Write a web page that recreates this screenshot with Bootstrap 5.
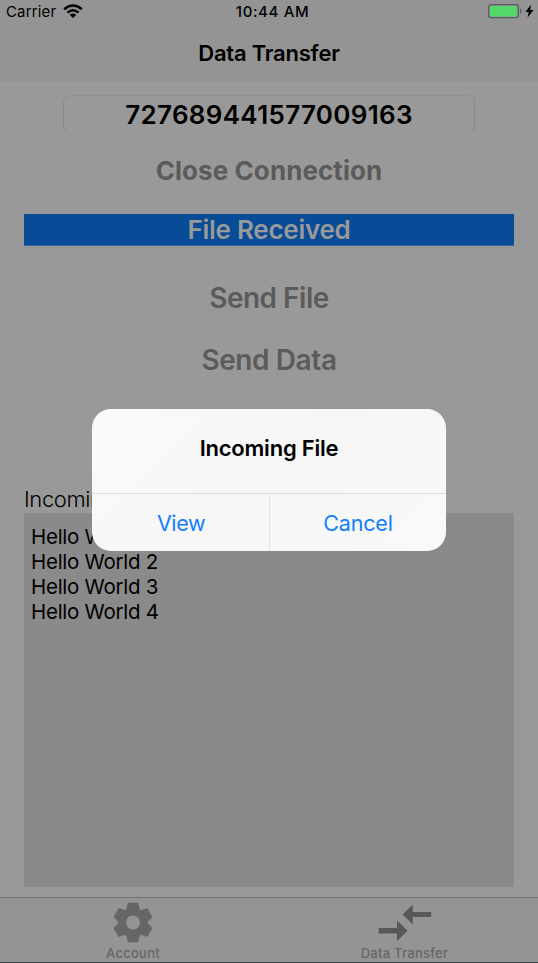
<!DOCTYPE html>
<html lang="en">
<head>
<meta charset="utf-8">
<meta name="viewport" content="width=device-width, initial-scale=1">
<title>Data Transfer</title>
<link href="https://cdn.jsdelivr.net/npm/bootstrap@5.3.0/dist/css/bootstrap.min.css" rel="stylesheet">
<style>
html,body{height:100%;overflow:hidden}
body{font-family:Inter,"Liberation Sans",sans-serif;color:#000;background:#999}
.screen{height:963px}
.app-head{height:82px;background:#949494;flex:none}
.status{height:24px;font-size:15px;line-height:24px}
.status .carrier{letter-spacing:.15px}
.status .clock{font-weight:500;letter-spacing:.62px;margin-left:7px}
.status-start{padding-left:6px;gap:7px}
.title{font-size:22px;line-height:58px;font-weight:600;letter-spacing:-.22px}
.code{margin:13px 63px 0;height:39px;border:1px solid;border-color:#919191 #8b8b8b #969696;border-radius:7px;font-size:26px;line-height:37px;font-weight:600;padding:0;background:transparent;color:#000;width:auto;letter-spacing:.31px}
.act{color:#5b5b5b;font-weight:600;font-size:28px;line-height:40px;border:0;padding:0}
.close-btn{font-size:26px;font-weight:700;margin-top:17px;letter-spacing:.08px}
.banner{margin:23px 24px 0;height:32px;background:#084c98;border-bottom:1px solid #3168a5;color:#999;font-size:26px;line-height:32px;font-weight:600;letter-spacing:-.27px}
.send-file{margin-top:32px;letter-spacing:-.5px}
.send-data{margin-top:22px;letter-spacing:-.4px}
.lbl{margin:104px 24px 0;height:29px;line-height:30px;font-size:22px;font-weight:300;letter-spacing:-.4px}
.log{margin:0 24px;height:374px;background:#8a8a8a;padding:11px 7px;font-size:20.5px;line-height:25px;letter-spacing:-.27px}
.tabs{margin-top:10px;height:66px;background:#949494;border-top:1px solid #737373;border-bottom:1px solid #35474e;font-size:13px;line-height:16px;color:#666;letter-spacing:.25px;font-weight:500}
.tabs svg{display:block;height:47px}
.tab-first{width:266px}
.tab-second{padding-left:5px}
.alert-box{left:92px;top:409px;width:354px;height:142px;border-radius:19px;background:linear-gradient(135deg,#fafafa,#f6f6f6 50%,#f9f9f9);overflow:hidden}
.alert-title{height:85px;line-height:79px;font-size:22px;font-weight:600;border-bottom:1px solid #dcdcdc;letter-spacing:-.22px}
.alert-box .opt{flex:1;border:0;border-radius:0;padding:0;color:#147efb;font-size:21.5px;line-height:58px;letter-spacing:-.2px}
.alert-box .opt-view{letter-spacing:-.4px;padding-left:1px}
.alert-box .opt+.opt{border-left:1px solid #e2e2e2}
</style>
</head>
<body>
<div class="screen d-flex flex-column position-relative">
<header class="app-head">
<div class="status d-flex justify-content-between">
<div class="status-start d-flex w-25"><span class="carrier">Carrier</span>
<svg width="20" height="24" viewBox="0 0 20 24"><g fill="none" stroke="#000" stroke-width="2.5"><path d="M1.2 9.2Q10 1.7 18.8 9.2M4.4 12.6Q10 8 15.6 12.6"/></g><path d="M6.6 14.7Q10 12.1 13.4 14.7L10 18Z"/></svg></div>
<span class="clock">10:44 AM</span>
<div class="w-25 d-flex justify-content-end"><svg width="50" height="24" viewBox="488 0 50 24"><rect x="488.7" y="4.7" width="29.6" height="13" rx="2.4" fill="none" stroke="#5c5c5c" stroke-width="1.3"/><rect x="490" y="6" width="27" height="10.4" rx="1" fill="#53d769"/><path d="M520 8.6q3 2.6 0 5.2z" fill="#575757"/><path d="M530.9 4.7L525.5 12h3.2l-1.1 5.6L533.5 10h-3.3z"/></svg></div>
</div>
<h1 class="title text-center m-0">Data Transfer</h1>
</header>
<main class="d-flex flex-column">
<div class="code text-center">727689441577009163</div>
<button class="btn act close-btn" type="button">Close Connection</button>
<div class="banner text-center">File Received</div>
<button class="btn act send-file" type="button">Send File</button>
<button class="btn act send-data" type="button">Send Data</button>
<div class="lbl">Incoming Data</div>
<div class="log"><div>Hello World 1</div><div>Hello World 2</div><div>Hello World 3</div><div>Hello World 4</div></div>
</main>
<nav class="tabs d-flex text-center">
<div class="tab-first d-flex flex-column align-items-center"><svg width="48" height="47" viewBox="-24 -24.5 48 47" fill="#666"><defs><path id="tooth" d="M-6.7-12L-4.9-19.4H4.9L6.7-12Z" stroke="#666" stroke-width=".6" stroke-linejoin="round"/></defs><circle r="10.7" fill="none" stroke="#666" stroke-width="7.6"/><use href="#tooth"/><use href="#tooth" transform="rotate(60)"/><use href="#tooth" transform="rotate(120)"/><use href="#tooth" transform="rotate(180)"/><use href="#tooth" transform="rotate(240)"/><use href="#tooth" transform="rotate(300)"/></svg><span>Account</span></div>
<div class="tab-second flex-fill d-flex flex-column align-items-center"><svg width="54" height="47" viewBox="375.5 898 54 47" fill="#585858"><path d="M400 914.5l10-10v7.4h18.5v5H410v7.5zM376 928h18.3v-7.5l10.5 10.2-10.5 10.3v-7.6H376z" transform="translate(.2)"/></svg><span>Data Transfer</span></div>
</nav>
<div class="alert-box position-absolute text-center" role="dialog">
<div class="alert-title">Incoming File</div>
<div class="d-flex"><button class="btn opt opt-view" type="button">View</button><button class="btn opt" type="button">Cancel</button></div>
</div>
</div>
<script src="https://cdn.jsdelivr.net/npm/bootstrap@5.3.0/dist/js/bootstrap.bundle.min.js"></script>
</body>
</html>
